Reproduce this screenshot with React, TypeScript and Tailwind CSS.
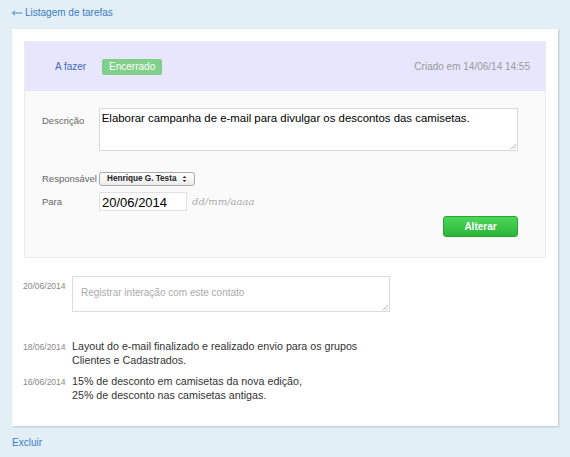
import React from 'react';

const sans = { fontFamily: '"Liberation Sans", Arial, sans-serif' };

function Entry({ date, lines }: { date: string; lines: string[] }) {
  return (
    <div className="flex items-start">
      <div className="w-[49px] pt-[2px] text-[8.5px] text-[#888]">{date}</div>
      <div className="text-[10.7px] leading-[14px] text-[#333]">
        {lines.map((l) => (
          <div key={l}>{l}</div>
        ))}
      </div>
    </div>
  );
}

function Grip() {
  return (
    <svg className="absolute right-[1px] bottom-[1px]" width="6" height="6" viewBox="0 0 6 6">
      <path d="M1 6 L6 1 M3.5 6 L6 3.5" stroke="#aaa" strokeWidth="0.8" />
    </svg>
  );
}

export default function App() {
  return (
    <div className="min-h-screen w-[570px] h-[457px] bg-[#e3eff7] px-3 pt-[5px]" style={sans}>
      <a href="#" className="flex items-center h-[24px] pb-[9px] text-[10px] leading-[15px] text-[#3b7cc4]">
        <svg width="11" height="6" viewBox="0 0 11 6" className="mr-[2px]">
          <path d="M0.5 3 H10.5 M0.5 3 L3 0.8 M0.5 3 L3 5.2" stroke="#3b7cc4" strokeWidth="0.9" fill="none" />
        </svg>
        Listagem de tarefas
      </a>

      <div className="w-[546px] h-[397px] bg-white px-3 pt-3 shadow-[1px_1px_2px_rgba(0,0,0,0.18)]">
        <div className="border border-[#ececec]">
          <div className="h-[49px] bg-[#e8e6fd] flex items-center pl-[30px] pr-[15px] text-[10px]">
            <span className="text-[#3f6db8]">A fazer</span>
            <span className="ml-[16px] h-[16px] w-[60px] flex items-center justify-center bg-[#80d08b] text-white rounded-[2px]">
              Encerrado
            </span>
            <span className="ml-auto text-[#9a9a9a]">Criado em 14/06/14 14:55</span>
          </div>

          <div className="h-[166px] bg-[#fafafa] pl-[17px] pr-[27px] pt-[17px]">
            <div className="flex items-start">
              <div className="w-[57px] pt-[6px] text-[9.5px] text-[#666]">Descrição</div>
              <div className="relative w-[421px] h-[43px] bg-white border border-[#d9d9d9] px-[2px] pt-[1px] text-[11.4px] text-black">
                Elaborar campanha de e-mail para divulgar os descontos das camisetas.
                <Grip />
              </div>
            </div>

            <div className="mt-[21px] flex items-center">
              <div className="w-[57px] whitespace-nowrap text-[9.5px] text-[#666]">Responsável</div>
              <div className="h-[14px] w-[96px] flex items-center justify-between whitespace-nowrap rounded-[3px] border border-[#a9a9a9] bg-gradient-to-b from-white to-[#ececec] pl-[7px] pr-[7px] text-[8.2px] font-bold text-[#222]">
                <span>Henrique G. Testa</span>
                <svg width="5" height="8" viewBox="0 0 5 8">
                  <path d="M0.5 3 L2.5 1 L4.5 3 Z M0.5 5 L2.5 7 L4.5 5 Z" fill="#333" />
                </svg>
              </div>
            </div>

            <div className="mt-[6px] flex items-center">
              <div className="w-[57px] text-[9.5px] text-[#666]">Para</div>
              <div className="h-[19px] w-[88px] bg-white border border-[#e0e0e0] pl-[2px] pt-[1px] flex items-center text-[13px] text-black">
                20/06/2014
              </div>
              <span className="ml-[5px] text-[10px] italic text-[#aaa]" style={{ fontFamily: '"DejaVu Serif", Georgia, serif' }}>
                dd/mm/aaaa
              </span>
            </div>

            <div className="mt-[5px] flex justify-end">
              <button className="h-[21px] w-[75px] rounded-[3px] border border-[#28a535] bg-gradient-to-b from-[#4bd859] to-[#2cb439] text-[10px] font-bold text-white">
                Alterar
              </button>
            </div>
          </div>
        </div>

        <div className="mt-[18px]">
          <div className="flex items-start -ml-[1px]">
            <div className="w-[49px] pt-[4px] text-[8.5px] text-[#888]">20/06/2014</div>
            <div className="relative w-[318px] h-[36px] bg-white border border-[#dcdcdc] px-[8px] pt-[8px] text-[10px] text-[#aaa]">
              Registrar interação com este contato
              <Grip />
            </div>
          </div>

          <div className="mt-[27px] -ml-[1px] flex flex-col gap-[7px]">
            <Entry
              date="18/06/2014"
              lines={['Layout do e-mail finalizado e realizado envio para os grupos', 'Clientes e Cadastrados.']}
            />
            <Entry
              date="16/06/2014"
              lines={['15% de desconto em camisetas da nova edição,', '25% de desconto nas camisetas antigas.']}
            />
          </div>
        </div>
      </div>

      <a href="#" className="block mt-[9px] text-[10px] text-[#3b7cc4]">
        Excluir
      </a>
    </div>
  );
}
